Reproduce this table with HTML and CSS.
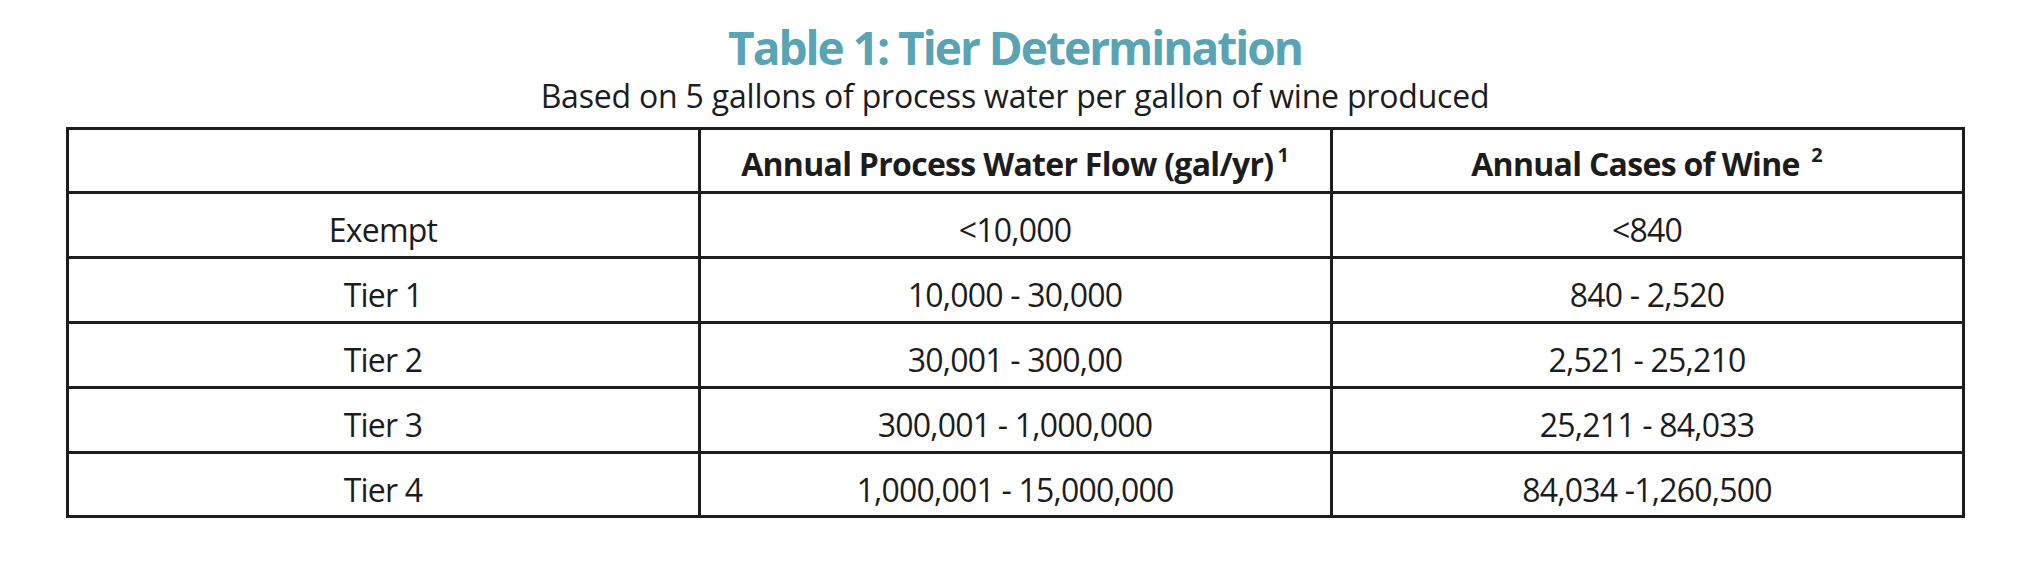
FILE: index.html
```html
<!DOCTYPE html>
<html lang="en">
<head>
<meta charset="utf-8">
<title>Table 1: Tier Determination</title>
<link rel="stylesheet" href="styles.css">
</head>
<body>
<div class="figure">
  <h1 class="title">Table 1: Tier Determination</h1>
  <p class="subtitle">Based on 5 gallons of process water per gallon of wine produced</p>
  <table class="tiers">
    <thead>
      <tr class="head-row">
        <th></th>
        <th>Annual Process Water Flow (gal/yr)<sup class="note">1</sup></th>
        <th>Annual Cases of Wine <sup class="note">2</sup></th>
      </tr>
    </thead>
    <tbody>
      <tr><td>Exempt</td><td>&lt;10,000</td><td>&lt;840</td></tr>
      <tr><td>Tier 1</td><td>10,000 - 30,000</td><td>840 - 2,520</td></tr>
      <tr><td>Tier 2</td><td>30,001 - 300,00</td><td>2,521 - 25,210</td></tr>
      <tr><td>Tier 3</td><td>300,001 - 1,000,000</td><td>25,211 - 84,033</td></tr>
      <tr class="last-row"><td>Tier 4</td><td>1,000,001 - 15,000,000</td><td>84,034 -1,260,500</td></tr>
    </tbody>
  </table>
</div>
</body>
</html>
```

FILE: styles.css
```css
html, body {
  margin: 0;
  padding: 0;
  background: #ffffff;
}

body {
  font-family: "Open Sans", "Noto Sans", sans-serif;
  color: #1c1c1c;
}

.figure {
  width: 2030px;
  padding-top: 22px;
}

.title {
  margin: 0;
  text-align: center;
  font-size: 46px;
  line-height: 50px;
  font-weight: 700;
  letter-spacing: -2px;
  color: #58a4b4;
}

.subtitle {
  margin: 6px 0 0;
  text-align: center;
  font-size: 32px;
  line-height: 36px;
  font-weight: 400;
  letter-spacing: -0.2px;
}

.tiers {
  margin: 13px auto 0;
  width: 1899px;
  table-layout: fixed;
  border-collapse: separate;
  border-spacing: 0;
  border-top: 3px solid #1d1d1d;
  border-left: 3px solid #1d1d1d;
}

.tiers th,
.tiers td {
  padding: 18px 0 0;
  border-right: 3px solid #1d1d1d;
  border-bottom: 3px solid #1d1d1d;
  text-align: center;
  vertical-align: top;
  font-size: 32px;
  line-height: 36px;
  white-space: nowrap;
}

.tiers td {
  font-weight: 400;
  letter-spacing: -0.8px;
}

.tiers th {
  padding-top: 16px;
  font-weight: 700;
  letter-spacing: -0.7px;
}

.head-row {
  height: 64px;
}

.tiers tbody tr {
  height: 65px;
}

.tiers tbody tr.last-row {
  height: 64px;
}

.note {
  font-size: 20px;
  line-height: 0;
  vertical-align: 14px;
  margin-left: 4px;
  letter-spacing: 0;
}
```
